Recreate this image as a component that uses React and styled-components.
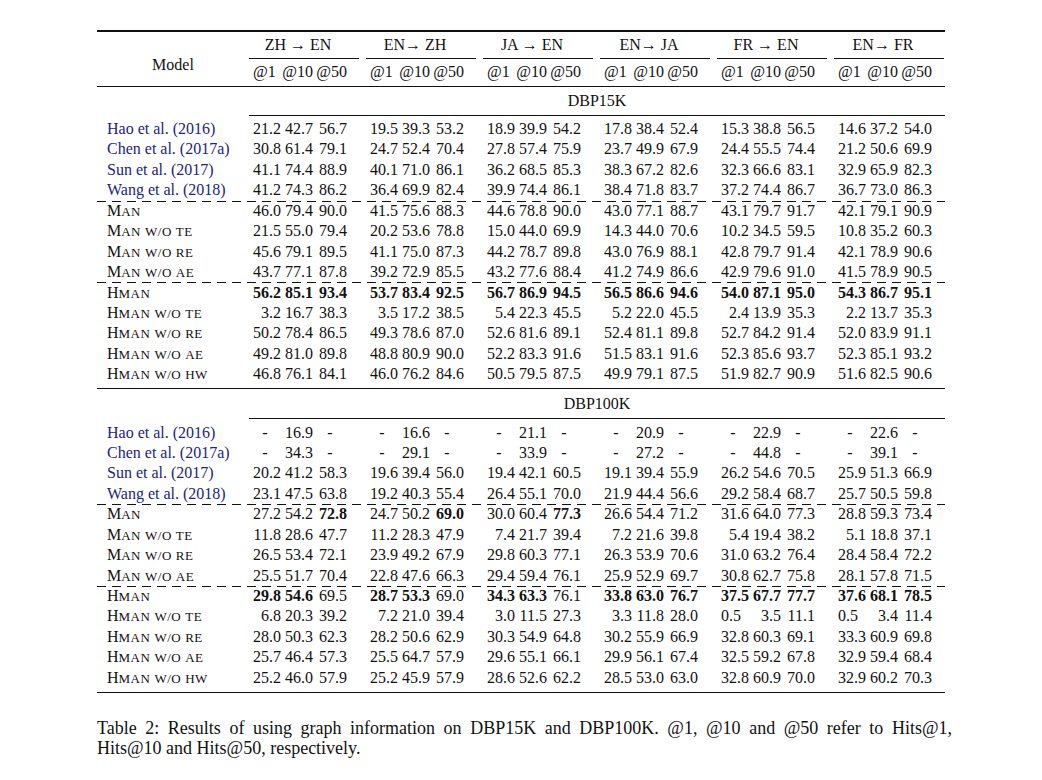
import styled, { createGlobalStyle } from 'styled-components';

const GlobalStyle = createGlobalStyle`
  body {
    margin: 0;
    background: #fff;
    color: #111;
    font-family: "Liberation Serif", "Times New Roman", serif;
  }
`;

const GROUP_COLS = '152px repeat(5, 117px) 111px';

const Page = styled.div`
  padding: 30px 0 40px 97px;
`;

const Table = styled.div`
  width: 848px;
  font-size: 16px;
`;

const Rule = styled.div`
  height: ${(p) => p.$weight || 1}px;
  background: #111;
  margin-left: ${(p) => p.$indent || 0}px;
`;

const HeaderRow = styled.div`
  display: grid;
  grid-template-columns: ${GROUP_COLS};
`;

const ModelCell = styled.div`
  display: flex;
  align-items: center;
  justify-content: center;
  padding-top: 12px;
`;

const HeadGroup = styled.div`
  display: flex;
  flex-direction: column;
`;

const GroupTitle = styled.div`
  width: 98px;
  height: 26px;
  display: flex;
  align-items: center;
  justify-content: center;
  white-space: pre;
`;

const CmidLine = styled.div`
  width: 110px;
  height: 1px;
  background: #111;
`;

const Triple = styled.div`
  display: grid;
  grid-template-columns: 32px 32px 34px;
  align-items: center;
  height: ${(p) => p.$height || 'auto'};
`;

const SubHead = styled.span`
  text-align: ${(p) => p.$align};
  padding-left: ${(p) => (p.$align === 'left' ? 4 : 0)}px;
  white-space: nowrap;
`;

const SectionRow = styled.div`
  display: grid;
  grid-template-columns: ${GROUP_COLS};
  height: ${(p) => p.$height}px;
  align-items: center;
`;

const SectionTitle = styled.div`
  grid-column: 2 / -1;
  text-align: center;
`;

const Body = styled.div`
  padding: 3.3px 0 4px;
`;

const DataRow = styled.div`
  position: relative;
  display: grid;
  grid-template-columns: ${GROUP_COLS};
  height: 20.45px;
  align-items: center;

  &::before {
    content: '';
    display: ${(p) => (p.$dashed ? 'block' : 'none')};
    position: absolute;
    left: 0;
    right: 0;
    top: 0;
    height: 1px;
    background: repeating-linear-gradient(90deg, #111 0 9px, transparent 9px 15px);
  }
`;

const Label = styled.div`
  padding-left: 10px;
  white-space: nowrap;
  color: ${(p) => (p.$cite ? '#23237f' : '#111')};
`;

const Small = styled.span`
  font-size: 13px;
  letter-spacing: 0.5px;
`;

const Num = styled.span`
  text-align: ${(p) => p.$align};
  padding-left: ${(p) => (p.$align === 'left' ? 4 : 0)}px;
  font-weight: ${(p) => (p.$bold ? 700 : 400)};
  white-space: nowrap;
`;

const Caption = styled.div`
  width: 855px;
  margin-top: 25px;
  font-size: 18px;
  line-height: 20px;
`;

const CaptionLine = styled.div`
  text-align: ${(p) => (p.$justify ? 'justify' : 'left')};
  text-align-last: ${(p) => (p.$justify ? 'justify' : 'auto')};
`;

const PAIRS = ['ZH \u2192 EN', 'EN\u2192 ZH', 'JA \u2192 EN', 'EN\u2192 JA', 'FR \u2192 EN', 'EN\u2192 FR'];

const DBP15K = [
  ['Hao et al. (2016)', 1, 0, '21.2 42.7 56.7|19.5 39.3 53.2|18.9 39.9 54.2|17.8 38.4 52.4|15.3 38.8 56.5|14.6 37.2 54.0'],
  ['Chen et al. (2017a)', 1, 0, '30.8 61.4 79.1|24.7 52.4 70.4|27.8 57.4 75.9|23.7 49.9 67.9|24.4 55.5 74.4|21.2 50.6 69.9'],
  ['Sun et al. (2017)', 1, 0, '41.1 74.4 88.9|40.1 71.0 86.1|36.2 68.5 85.3|38.3 67.2 82.6|32.3 66.6 83.1|32.9 65.9 82.3'],
  ['Wang et al. (2018)', 1, 0, '41.2 74.3 86.2|36.4 69.9 82.4|39.9 74.4 86.1|38.4 71.8 83.7|37.2 74.4 86.7|36.7 73.0 86.3'],
  ['Man', 0, 1, '46.0 79.4 90.0|41.5 75.6 88.3|44.6 78.8 90.0|43.0 77.1 88.7|43.1 79.7 91.7|42.1 79.1 90.9'],
  ['Man w/o te', 0, 0, '21.5 55.0 79.4|20.2 53.6 78.8|15.0 44.0 69.9|14.3 44.0 70.6|10.2 34.5 59.5|10.8 35.2 60.3'],
  ['Man w/o re', 0, 0, '45.6 79.1 89.5|41.1 75.0 87.3|44.2 78.7 89.8|43.0 76.9 88.1|42.8 79.7 91.4|42.1 78.9 90.6'],
  ['Man w/o ae', 0, 0, '43.7 77.1 87.8|39.2 72.9 85.5|43.2 77.6 88.4|41.2 74.9 86.6|42.9 79.6 91.0|41.5 78.9 90.5'],
  ['Hman', 0, 1, '*56.2 *85.1 *93.4|*53.7 *83.4 *92.5|*56.7 *86.9 *94.5|*56.5 *86.6 *94.6|*54.0 *87.1 *95.0|*54.3 *86.7 *95.1'],
  ['Hman w/o te', 0, 0, '3.2 16.7 38.3|3.5 17.2 38.5|5.4 22.3 45.5|5.2 22.0 45.5|2.4 13.9 35.3|2.2 13.7 35.3'],
  ['Hman w/o re', 0, 0, '50.2 78.4 86.5|49.3 78.6 87.0|52.6 81.6 89.1|52.4 81.1 89.8|52.7 84.2 91.4|52.0 83.9 91.1'],
  ['Hman w/o ae', 0, 0, '49.2 81.0 89.8|48.8 80.9 90.0|52.2 83.3 91.6|51.5 83.1 91.6|52.3 85.6 93.7|52.3 85.1 93.2'],
  ['Hman w/o hw', 0, 0, '46.8 76.1 84.1|46.0 76.2 84.6|50.5 79.5 87.5|49.9 79.1 87.5|51.9 82.7 90.9|51.6 82.5 90.6'],
];

const DBP100K = [
  ['Hao et al. (2016)', 1, 0, '- 16.9 -|- 16.6 -|- 21.1 -|- 20.9 -|- 22.9 -|- 22.6 -'],
  ['Chen et al. (2017a)', 1, 0, '- 34.3 -|- 29.1 -|- 33.9 -|- 27.2 -|- 44.8 -|- 39.1 -'],
  ['Sun et al. (2017)', 1, 0, '20.2 41.2 58.3|19.6 39.4 56.0|19.4 42.1 60.5|19.1 39.4 55.9|26.2 54.6 70.5|25.9 51.3 66.9'],
  ['Wang et al. (2018)', 1, 0, '23.1 47.5 63.8|19.2 40.3 55.4|26.4 55.1 70.0|21.9 44.4 56.6|29.2 58.4 68.7|25.7 50.5 59.8'],
  ['Man', 0, 1, '27.2 54.2 *72.8|24.7 50.2 *69.0|30.0 60.4 *77.3|26.6 54.4 71.2|31.6 64.0 77.3|28.8 59.3 73.4'],
  ['Man w/o te', 0, 0, '11.8 28.6 47.7|11.2 28.3 47.9|7.4 21.7 39.4|7.2 21.6 39.8|5.4 19.4 38.2|5.1 18.8 37.1'],
  ['Man w/o re', 0, 0, '26.5 53.4 72.1|23.9 49.2 67.9|29.8 60.3 77.1|26.3 53.9 70.6|31.0 63.2 76.4|28.4 58.4 72.2'],
  ['Man w/o ae', 0, 0, '25.5 51.7 70.4|22.8 47.6 66.3|29.4 59.4 76.1|25.9 52.9 69.7|30.8 62.7 75.8|28.1 57.8 71.5'],
  ['Hman', 0, 1, '*29.8 *54.6 69.5|*28.7 *53.3 69.0|*34.3 *63.3 76.1|*33.8 *63.0 *76.7|*37.5 *67.7 *77.7|*37.6 *68.1 *78.5'],
  ['Hman w/o te', 0, 0, '6.8 20.3 39.2|7.2 21.0 39.4|3.0 11.5 27.3|3.3 11.8 28.0|0.5 3.5 11.1|0.5 3.4 11.4'],
  ['Hman w/o re', 0, 0, '28.0 50.3 62.3|28.2 50.6 62.9|30.3 54.9 64.8|30.2 55.9 66.9|32.8 60.3 69.1|33.3 60.9 69.8'],
  ['Hman w/o ae', 0, 0, '25.7 46.4 57.3|25.5 64.7 57.9|29.6 55.1 66.1|29.9 56.1 67.4|32.5 59.2 67.8|32.9 59.4 68.4'],
  ['Hman w/o hw', 0, 0, '25.2 46.0 57.9|25.2 45.9 57.9|28.6 52.6 62.2|28.5 53.0 63.0|32.8 60.9 70.0|32.9 60.2 70.3'],
];

function alignOf(v) {
  if (v === '-') return 'center';
  if (v.startsWith('0.')) return 'left';
  return 'right';
}

// lowercase runs are set as small capitals
function smallCaps(text) {
  return text.split(/([a-z/]+)/).map((part, i) =>
    /^[a-z/]+$/.test(part) ? <Small key={i}>{part.toUpperCase()}</Small> : part
  );
}

function Row({ name, cite, dashed, values }) {
  return (
    <DataRow $dashed={dashed}>
      <Label $cite={cite}>{cite ? name : smallCaps(name)}</Label>
      {values.split('|').map((group, g) => (
        <Triple key={g}>
          {group.trim().split(/\s+/).map((raw, i) => {
            const bold = raw.startsWith('*');
            const v = bold ? raw.slice(1) : raw;
            return (
              <Num key={i} $bold={bold} $align={alignOf(v)}>
                {v}
              </Num>
            );
          })}
        </Triple>
      ))}
    </DataRow>
  );
}

function Section({ title, rows, first }) {
  return (
    <>
      <SectionRow $height={first ? 28 : 28.5}>
        <SectionTitle>{title}</SectionTitle>
      </SectionRow>
      <Rule $indent={152} />
      <Body>
        {rows.map(([name, cite, dashed, values]) => (
          <Row key={name} name={name} cite={!!cite} dashed={!!dashed} values={values} />
        ))}
      </Body>
    </>
  );
}

export default function App() {
  return (
    <>
      <GlobalStyle />
      <Page>
        <Table>
          <Rule $weight={1.5} />
          <HeaderRow>
            <ModelCell>Model</ModelCell>
            {PAIRS.map((pair) => (
              <HeadGroup key={pair}>
                <GroupTitle>{pair}</GroupTitle>
                <CmidLine />
                <Triple $height="27px">
                  <SubHead $align="left">@1</SubHead>
                  <SubHead $align="right">@10</SubHead>
                  <SubHead $align="right">@50</SubHead>
                </Triple>
              </HeadGroup>
            ))}
          </HeaderRow>
          <Rule />
          <Section title="DBP15K" rows={DBP15K} first />
          <Rule />
          <Section title="DBP100K" rows={DBP100K} />
          <Rule $weight={1.5} />
        </Table>
        <Caption>
          <CaptionLine $justify>
            Table 2: Results of using graph information on DBP15K and DBP100K. @1, @10 and @50 refer to Hits@1,
          </CaptionLine>
          <CaptionLine>Hits@10 and Hits@50, respectively.</CaptionLine>
        </Caption>
      </Page>
    </>
  );
}
